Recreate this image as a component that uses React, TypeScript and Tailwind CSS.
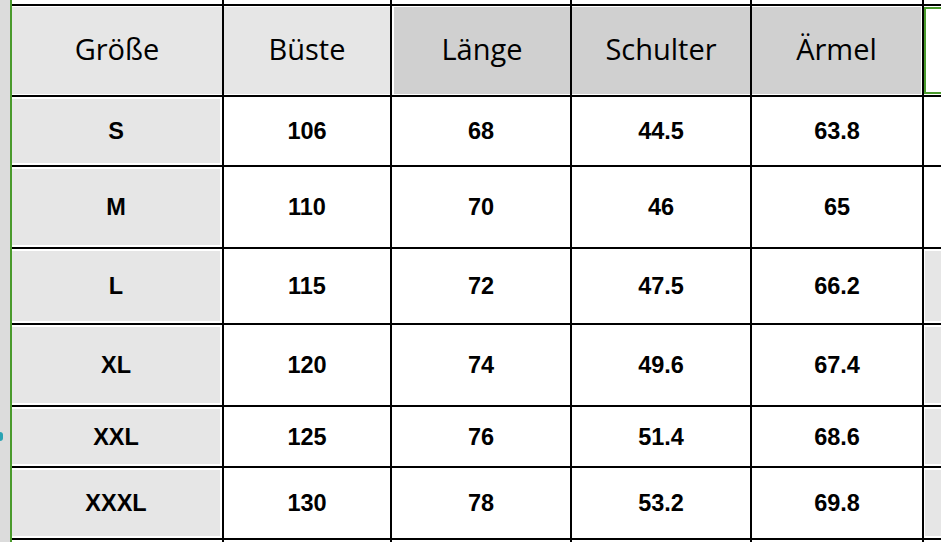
import React from 'react';

const headers = [
    { label: 'Größe', fill: 'bg-[#e6e6e6]', pad: 'py-[1px]' },
    { label: 'Büste', fill: 'bg-[#e6e6e6]', pad: 'py-[1px]' },
    { label: 'Länge', fill: 'bg-[#d0d0d0]', pad: 'py-[1px] pl-[2px]' },
    { label: 'Schulter', fill: 'bg-[#d0d0d0]', pad: 'py-[1px]' },
    { label: 'Ärmel', fill: 'bg-[#d0d0d0]', pad: 'py-[1px] pr-[1px]' },
];

const rows = [
    { size: 'S', values: ['106', '68', '44.5', '63.8'], side: false },
    { size: 'M', values: ['110', '70', '46', '65'], side: false },
    { size: 'L', values: ['115', '72', '47.5', '66.2'], side: true },
    { size: 'XL', values: ['120', '74', '49.6', '67.4'], side: true },
    { size: 'XXL', values: ['125', '76', '51.4', '68.6'], side: true },
    { size: 'XXXL', values: ['130', '78', '53.2', '69.8'], side: true },
];

const headFont = { fontFamily: '"Open Sans", "Noto Sans", sans-serif' };
const dataFont = { fontFamily: '"Liberation Sans", Arial, sans-serif' };

export default function App() {
    return (
        <div className="relative flex w-[941px] h-[542px] overflow-hidden bg-white">
            {/* sheet gutter + selection edge */}
            <div className="w-[10px] bg-[#dcdcdc]" />
            <div className="w-[2px] bg-[#4a9a2c]" />
            <div className="absolute left-[-3px] top-[432px] w-[6px] h-[9px] rounded-full bg-[#2aa3b3]" />

            <div className="flex-1 grid grid-cols-[210px_166px_178px_178px_170px_1fr] grid-rows-[4px_89px_68px_80px_74px_80px_59px_70px_2px] gap-[2px] bg-black">
                {/* top strip */}
                {Array.from({ length: 6 }).map((_, i) => (
                    <div key={`top-${i}`} className="bg-white" />
                ))}

                {/* header */}
                {headers.map(h => (
                    <div key={h.label} className={`bg-white flex ${h.pad}`}>
                        <div className={`flex-1 flex items-center justify-center pb-[4px] text-[29px] text-black ${h.fill}`} style={headFont}>
                            {h.label}
                        </div>
                    </div>
                ))}
                <div className="bg-white flex py-[1px]">
                    <div className="flex-1 border-2 border-r-0 border-[#4a9a2c] bg-white" />
                </div>

                {/* body */}
                {rows.map(r => (
                    <React.Fragment key={r.size}>
                        <div className="bg-white flex py-[2px] pr-[2px]">
                            <div className="flex-1 flex items-center justify-center pt-[2px] bg-[#e6e6e6] text-[23.5px] font-bold text-black" style={dataFont}>
                                {r.size}
                            </div>
                        </div>
                        {r.values.map((v, i) => (
                            <div key={i} className="bg-white flex items-center justify-center pt-[2px] text-[23.5px] font-bold text-black" style={dataFont}>
                                {v}
                            </div>
                        ))}
                        <div className="bg-white flex py-[2px] pl-[1px]">
                            {r.side && <div className="flex-1 bg-[#e6e6e6]" />}
                        </div>
                    </React.Fragment>
                ))}

                {/* bottom strip */}
                {Array.from({ length: 6 }).map((_, i) => (
                    <div key={`bot-${i}`} className="bg-white" />
                ))}
            </div>
        </div>
    );
}
